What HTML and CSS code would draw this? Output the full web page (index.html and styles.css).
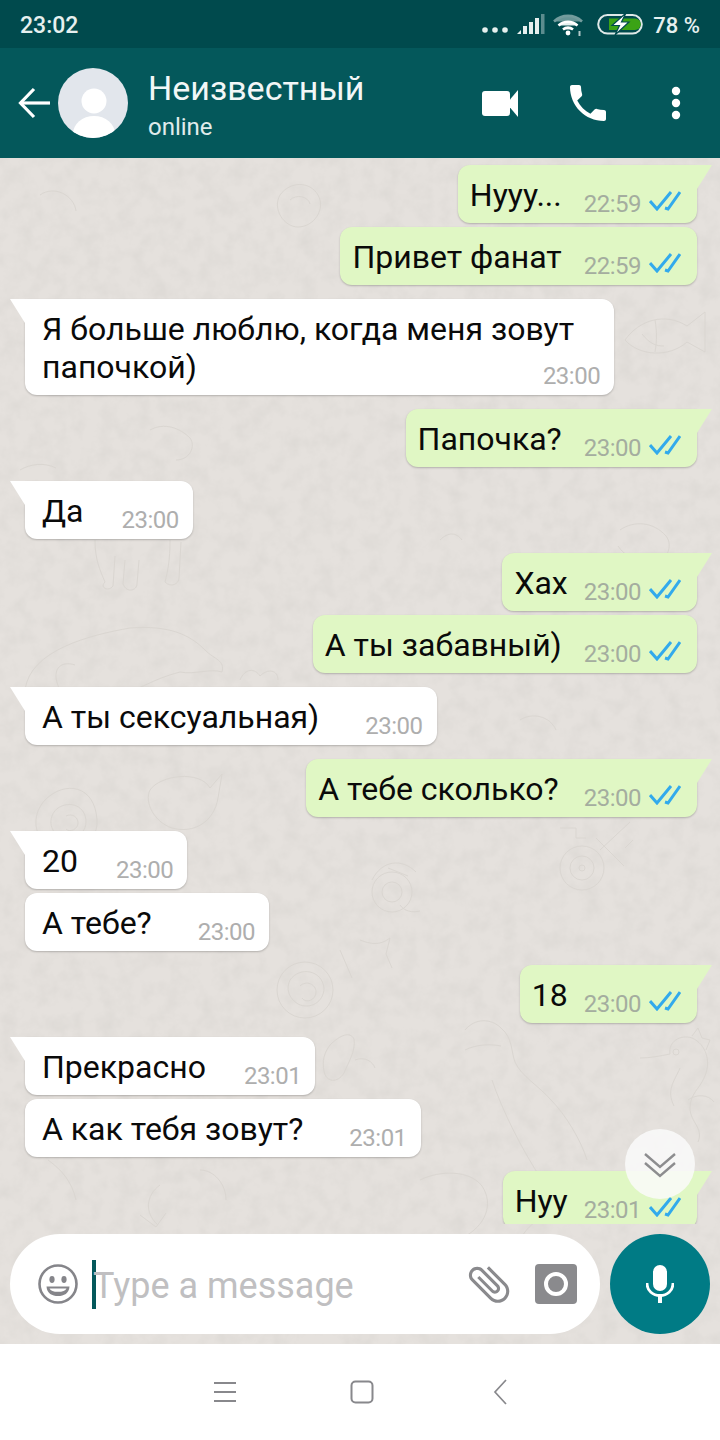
FILE: index.html
```html
<!DOCTYPE html>
<html lang="ru">
<head>
    <meta charset="UTF-8" />
    <meta name="viewport" content="width=device-width, initial-scale=1" />
    <title>Неизвестный</title>
    <link rel="stylesheet" href="styles.css">
</head>
<body>
<div class="phone">

    <div class="status-bar">
        <span class="status-time">23:02</span>
        <div class="status-right">
            <svg class="st-dots" width="26" height="6" viewBox="0 0 26 6"><circle cx="3" cy="3" r="2.8"/><circle cx="13" cy="3" r="2.8"/><circle cx="23" cy="3" r="2.8"/></svg>
            <svg class="st-signal" width="28" height="21" viewBox="0 0 28 21"><path d="M0 20l4-4v4z"/><rect x="6" y="12" width="4" height="8"/><rect x="12" y="8" width="4" height="12"/><rect x="18" y="4" width="4" height="16"/><rect x="24" y="0" width="3.5" height="20" opacity=".4"/></svg>
            <svg class="st-wifi" width="31" height="24" viewBox="0 0 31 24" fill="none" stroke="#fff" stroke-width="2.6"><path d="M1 8.500C9 1 21 1 29 8.500" opacity=".45"/><path d="M5.500 12.500C11 7.500 19 7.500 24.500 12.500"/><path d="M10 16.500C13 14 17 14 20 16.500"/><circle cx="15" cy="20" r="2.400" fill="#fff" stroke="none"/><path d="M26.500 18v5" stroke-width="2" opacity=".7"/></svg>
            <svg class="st-batt" width="46" height="22" viewBox="0 0 46 22"><rect x="1.200" y="2" width="43.600" height="18.600" rx="9.300" fill="none" stroke="#dfe9e8" stroke-width="2"/><path d="M12 5.500h26a5.600 5.600 0 0 1 0 11.500H12z" fill="#3ba315"/><path d="M29 0L15 12.500h7.500L18 22l14-13h-7.500z" fill="#fff" stroke="#004a4d" stroke-width="1.200"/></svg>
            <span class="status-batt">78 %</span>
        </div>
    </div>

    <header class="chat-header">
        <svg class="back-icon" width="32" height="32" viewBox="0 0 32 32" fill="none" stroke="#fff" stroke-width="3.200"><path d="M32 16H3"/><path d="M16 2L2.500 16 16 30"/></svg>
        <svg class="avatar" width="70" height="70" viewBox="0 0 70 70"><defs><clipPath id="av"><circle cx="35" cy="35" r="35"/></clipPath></defs><circle cx="35" cy="35" r="35" fill="#e2e6ec"/><circle cx="36" cy="33" r="12.500" fill="#fff"/><ellipse cx="36" cy="66" rx="21" ry="18" fill="#fff" clip-path="url(#av)"/></svg>
        <div class="contact">
            <div class="contact-name">Неизвестный</div>
            <div class="contact-status">online</div>
        </div>
        <div class="header-actions">
            <svg class="act-video" width="36" height="29" viewBox="0 0 36 29" fill="#fff"><path d="M3 2h22a3 3 0 0 1 3 3v19a3 3 0 0 1-3 3H3a3 3 0 0 1-3-3V5a3 3 0 0 1 3-3z"/><path d="M28 10.500L36 1v27l-8-9.500z"/></svg>
            <svg class="act-phone" width="36" height="36" viewBox="3 3 18 18" fill="#fff"><path d="M6.620 10.790c1.440 2.830 3.760 5.140 6.590 6.590l2.200-2.200c.27-.27.67-.36 1.020-.24 1.120.37 2.330.57 3.570.57.55 0 1 .45 1 1V20c0 .55-.45 1-1 1-9.390 0-17-7.610-17-17 0-.55.45-1 1-1h3.500c.55 0 1 .45 1 1 0 1.250.2 2.450.57 3.570.11.35.03.74-.25 1.020l-2.200 2.200z"/></svg>
            <svg class="act-more" width="10" height="34" viewBox="0 0 10 34" fill="#fff"><circle cx="5" cy="5" r="4.200"/><circle cx="5" cy="17" r="4.200"/><circle cx="5" cy="29" r="4.200"/></svg>
        </div>
    </header>

    <main class="chat">
        <svg class="wallpaper" width="720" height="1186" viewBox="0 158 720 1186" fill="none" stroke="#dad6d1" stroke-width="1">
            <defs>
                <filter id="marble" x="0" y="0" width="100%" height="100%">
                    <feTurbulence type="fractalNoise" baseFrequency="0.06" numOctaves="4" seed="7"/>
                    <feColorMatrix values="0 0 0 0 0.66  0 0 0 0 0.64  0 0 0 0 0.61  0 0 0 0.8 -0.3"/>
                </filter>
            </defs>
            <rect x="0" y="158" width="720" height="1186" filter="url(#marble)" stroke="none" fill="#fff"/>
            <!-- dino -->
            <path d="M25 690C30 650 90 635 130 628C170 625 190 635 205 650C215 660 225 660 222 672C210 668 195 675 180 672C150 680 140 690 130 690M60 690C50 670 60 660 75 665"/>
            <path d="M240 680c5-12 15-12 20-4c8-8 18-6 18 4"/>
            <!-- hippo above -->
            <path d="M95 540c0 20 5 30 10 42c-6 6 4 10 8 4l2-30M125 560l-2 24c4 10 14 6 14 0l2-24M170 540c0 20-2 30-5 42c6 6 14 2 14-4l2-36"/>
            <!-- rose, lower left -->
            <path d="M45 800c20-20 50-15 52 20c2 25-30 40-50 25c-15-12-14-32-2-45zM58 808c12-8 28-2 28 14c0 14-18 22-30 12c-8-8-6-20 2-26zM66 816c6-3 12 1 12 7s-8 10-12 6"/>
            <path d="M150 790c10-15 50-20 60-2l12-14l-4 24c-4 24-24 36-46 30c-18-6-28-26-22-38z"/>
            <!-- wheel -->
            <circle cx="582" cy="868" r="22"/><circle cx="582" cy="868" r="12"/><circle cx="582" cy="868" r="3"/>
            <path d="M600 850l30-28M596 838l28 28M560 828h16v10h10M625 848l8-8"/>
            <!-- rose centre -->
            <circle cx="392" cy="892" r="20"/><circle cx="392" cy="892" r="10"/><path d="M372 880c10-20 30-22 44-8M388 868l20 8M400 905c4 6 12 8 20 6"/>
            <circle cx="305" cy="990" r="28"/><path d="M290 980c10-14 32-10 34 8c0 14-14 22-26 16c-10-6-12-16-8-24zM300 986c6-6 16-2 16 6s-10 12-14 6"/>
            <path d="M360 940c10 4 20 6 30-2l-4 16l6 14M340 950l12 28"/>
            <!-- seahorse -->
            <path d="M640 1058c10 0 20-2 30-4c-2-12 10-20 22-16c14 6 20 24 12 40c-4 10-14 16-14 30c0 14 14 20 8 34M692 1036l6-8l4 10l8 2l-4 10M688 1100c8-6 20-6 26 2M680 1068c-6 14-14 22-6 38"/>
            <circle cx="676" cy="1052" r="3"/>
            <!-- bird -->
            <path d="M465 1030c10-12 26-12 36-2c12 10 10 24 14 34c6 14 24 24 36 38c14 14 30 40 36 60M465 1050c12-6 26-6 36-4M492 1080c10 30 30 70 50 100"/>
            <path d="M330 1045c10-10 20-14 24-6c2 12-6 24-10 34c-6 10-18 10-20-2c-2-10 0-18 6-26zM355 1060c10-4 18 2 20 8"/>
            <path d="M160 1185c-14 10-16 28-2 40M200 1170c14 0 26 14 26 30M140 1215l16 12 10-14M48 1160c14 10 24 22 28 40"/>
            <path d="M420 1180c20-10 50-10 62 6c12 18 4 40-20 52M520 1240c10-20 30-30 54-24"/>
            <!-- fish, top right -->
            <path d="M625 340c14-20 40-28 62-14l18-14v40l-18-10c-18 16-48 14-62-2zM642 334c8 10 14 12 22 12M655 320c2 12 2 20 0 32"/>
            <path d="M280 195c10-14 30-14 38 0c8 14-4 32-20 32c-14 0-26-18-18-32zM290 200c6-6 18-4 20 4"/>
            <path d="M40 195c14-10 34 0 36 16M20 470c10-6 24-8 36-2M620 530c14-10 34-8 46 6c8 10 0 26-12 28c-14 0-30-8-36-18M600 560l20 10"/>
            <path d="M150 430c14-8 30-2 40 8c6 8 0 22-14 22"/>
            <path d="M440 540c8-8 16-8 22 0M430 700c6 10 6 26 0 36M520 720c12-8 30-4 36 10"/>
        </svg>

        <div class="messages">
            <div class="msg out"><span class="msg-text">Нууу...</span><span class="meta"><span class="time">22:59</span><svg class="ticks" width="32" height="20" viewBox="0 0 32 20"><path d="M1 10l7 8L22 1M16 17l3 1L31 1"/></svg></span></div>
            <div class="msg out same"><span class="msg-text">Привет фанат</span><span class="meta"><span class="time">22:59</span><svg class="ticks" width="32" height="20" viewBox="0 0 32 20"><path d="M1 10l7 8L22 1M16 17l3 1L31 1"/></svg></span></div>

            <div class="msg in multi"><span class="msg-text">Я больше люблю, когда меня зовут<br>папочкой)</span><span class="meta"><span class="time">23:00</span></span></div>

            <div class="msg out"><span class="msg-text">Папочка?</span><span class="meta"><span class="time">23:00</span><svg class="ticks" width="32" height="20" viewBox="0 0 32 20"><path d="M1 10l7 8L22 1M16 17l3 1L31 1"/></svg></span></div>

            <div class="msg in"><span class="msg-text">Да</span><span class="meta"><span class="time">23:00</span></span></div>

            <div class="msg out tight"><span class="msg-text">Хах</span><span class="meta"><span class="time">23:00</span><svg class="ticks" width="32" height="20" viewBox="0 0 32 20"><path d="M1 10l7 8L22 1M16 17l3 1L31 1"/></svg></span></div>
            <div class="msg out same"><span class="msg-text">А ты забавный)</span><span class="meta"><span class="time">23:00</span><svg class="ticks" width="32" height="20" viewBox="0 0 32 20"><path d="M1 10l7 8L22 1M16 17l3 1L31 1"/></svg></span></div>

            <div class="msg in wide"><span class="msg-text">А ты сексуальная)</span><span class="meta"><span class="time">23:00</span></span></div>

            <div class="msg out roomy"><span class="msg-text">А тебе сколько?</span><span class="meta"><span class="time">23:00</span><svg class="ticks" width="32" height="20" viewBox="0 0 32 20"><path d="M1 10l7 8L22 1M16 17l3 1L31 1"/></svg></span></div>

            <div class="msg in"><span class="msg-text">20</span><span class="meta"><span class="time">23:00</span></span></div>
            <div class="msg in same wide"><span class="msg-text">А тебе?</span><span class="meta"><span class="time">23:00</span></span></div>

            <div class="msg out tight"><span class="msg-text">18</span><span class="meta"><span class="time">23:00</span><svg class="ticks" width="32" height="20" viewBox="0 0 32 20"><path d="M1 10l7 8L22 1M16 17l3 1L31 1"/></svg></span></div>

            <div class="msg in"><span class="msg-text">Прекрасно</span><span class="meta"><span class="time">23:01</span></span></div>
            <div class="msg in same wide"><span class="msg-text">А как тебя зовут?</span><span class="meta"><span class="time">23:01</span></span></div>

            <div class="msg out tight"><span class="msg-text">Нуу</span><span class="meta"><span class="time">23:01</span><svg class="ticks" width="32" height="20" viewBox="0 0 32 20"><path d="M1 10l7 8L22 1M16 17l3 1L31 1"/></svg></span></div>
        </div>

        <div class="scroll-down">
            <svg width="32" height="26" viewBox="0 0 32 26" fill="none" stroke="#8d8d8f" stroke-width="2.400"><path d="M1 2l15 13L31 2"/><path d="M1 11l15 13 15-13"/></svg>
        </div>

        <div class="composer">
            <div class="input-box">
                <svg class="emoji" width="40" height="40" viewBox="0 0 40 40"><circle cx="20" cy="20" r="18.500" fill="none" stroke="#85858a" stroke-width="2.600"/><ellipse cx="14" cy="15.500" rx="2.600" ry="3.400" fill="#85858a"/><ellipse cx="26" cy="15.500" rx="2.600" ry="3.400" fill="#85858a"/><path d="M8.500 22.500h23c-.5 7-5.500 9.500-11.500 9.500S9 29.500 8.500 22.500z" fill="#85858a"/><path d="M11.500 24.500h17c-1 2.500-4 3.300-8.500 3.300s-7.500-.8-8.500-3.300z" fill="#fff"/></svg>
                <span class="cursor"></span>
                <span class="placeholder">Type a message</span>
                <svg class="clip" width="50" height="50" viewBox="0 0 24 24" fill="#8a8a8d"><path transform="rotate(-45 12 12)" d="M16.500 6v11.500c0 2.210-1.790 4-4 4s-4-1.790-4-4V5c0-1.380 1.120-2.500 2.500-2.500s2.500 1.120 2.500 2.500v10.500c0 .55-.45 1-1 1s-1-.45-1-1V6H10v9.500c0 1.380 1.120 2.500 2.500 2.500s2.500-1.120 2.500-2.500V5c0-2.210-1.790-4-4-4S7 2.790 7 5v12.500c0 3.040 2.460 5.500 5.500 5.500s5.500-2.460 5.500-5.500V6h-1.500z"/></svg>
                <svg class="camera" width="42" height="40" viewBox="0 0 42 40"><rect width="42" height="40" rx="4" fill="#8a8a8d"/><circle cx="21" cy="20" r="10" fill="none" stroke="#fff" stroke-width="4"/></svg>
            </div>
            <button class="mic-btn">
                <svg width="28" height="38" viewBox="0 0 28 38" fill="#fff"><rect x="7" y="0" width="14" height="26" rx="7"/><path d="M1 18c0 8 6 12.500 13 12.500S27 26 27 18" fill="none" stroke="#fff" stroke-width="2.800"/><rect x="12" y="30" width="4" height="8"/></svg>
            </button>
        </div>
    </main>

    <nav class="nav-bar">
        <svg width="24" height="22" viewBox="0 0 24 22" fill="none" stroke="#88888c" stroke-width="2"><path d="M1 2h22M1 11h22M1 20h22"/></svg>
        <svg class="nav-home" width="24" height="24" viewBox="0 0 24 24" fill="none" stroke="#88888c" stroke-width="2"><rect x="1.500" y="1.500" width="21" height="21" rx="4"/></svg>
        <svg class="nav-back" width="14" height="26" viewBox="0 0 14 26" fill="none" stroke="#88888c" stroke-width="1.700"><path d="M13 1L2 13l11 12"/></svg>
    </nav>
</div>
</body>
</html>
```

FILE: styles.css
```css
* {
    box-sizing: border-box;
}
body {
    margin: 0;
    padding: 0;
    font-family: Roboto, "Liberation Sans", sans-serif;
    background: #fff;
}
.phone {
    width: 720px;
    height: 1440px;
    display: flex;
    flex-direction: column;
    overflow: hidden;
}

/* status bar */
.status-bar {
    height: 48px;
    flex: none;
    background: #004a4d;
    color: #e6f0ef;
    display: flex;
    align-items: center;
    justify-content: space-between;
    padding: 2px 20px 0;
}
.status-time {
    font-size: 23px;
    font-weight: 500;
}
.status-right {
    display: flex;
    align-items: center;
}
.status-right svg {
    fill: #e6f0ef;
    flex: none;
}
.st-dots {
    margin-top: 9px;
}
.st-signal {
    margin-left: 9px;
    margin-top: -2px;
}
.st-wifi {
    margin-left: 8px;
}
.st-batt {
    margin-left: 13px;
    margin-top: -3px;
}
.status-batt {
    margin-left: 10px;
    font-size: 22px;
    font-weight: 500;
}

/* header */
.chat-header {
    height: 110px;
    flex: none;
    background: #04585b;
    display: flex;
    align-items: center;
    padding-left: 18px;
    color: #fff;
}
.back-icon {
    flex: none;
}
.avatar {
    flex: none;
    margin-left: 8px;
}
.contact {
    margin-left: 20px;
    padding-top: 6px;
    flex: 1;
}
.contact-name {
    font-size: 34px;
    line-height: 42px;
    color: #f2f7f7;
}
.contact-status {
    font-size: 24px;
    line-height: 36px;
    color: #e0ecec;
}
.header-actions {
    display: flex;
    align-items: center;
    padding-right: 39px;
}
.act-phone {
    margin-left: 52px;
}
.act-more {
    margin-left: 65px;
}

/* chat */
.chat {
    flex: 1;
    position: relative;
    background: #e5e1dd;
    display: flex;
    flex-direction: column;
    min-height: 0;
}
.wallpaper {
    position: absolute;
    left: 0;
    top: 0;
}
.messages {
    flex: 1;
    min-height: 0;
    position: relative;
    overflow: hidden;
    display: flex;
    flex-direction: column;
    padding: 7px 23px 0 25px;
    margin-bottom: 10px;
}
.msg {
    flex: none;
    position: relative;
    display: flex;
    align-items: flex-end;
    border-radius: 12px;
    box-shadow: 0 1px 2px rgba(0,0,0,0.22);
    margin-top: 14px;
    padding: 11px 14px 9px 17px;
}
.msg.same {
    margin-top: 4px;
}
.msg:first-child {
    margin-top: 0;
}
.msg.in {
    align-self: flex-start;
    background: #fff;
    border-top-left-radius: 0;
}
.msg.out {
    align-self: flex-end;
    background: #e0f7c4;
    border-top-right-radius: 0;
    padding: 11px 16px 9px 12px;
}
.msg.in:not(.same)::before,
.msg.out:not(.same)::before {
    content: "";
    position: absolute;
    top: 0;
    width: 15px;
    height: 24px;
}
.msg.in:not(.same)::before {
    left: -15px;
    background: #fff;
    clip-path: polygon(0 0, 100% 0, 100% 100%);
}
.msg.out:not(.same)::before {
    right: -15px;
    background: #e0f7c4;
    clip-path: polygon(0 0, 100% 0, 0 100%);
}
.msg.same.in {
    border-top-left-radius: 12px;
}
.msg.same.out {
    border-top-right-radius: 12px;
}
.msg-text {
    font-size: 32px;
    line-height: 38px;
    color: #0a0a0a;
}
.meta {
    display: flex;
    align-items: center;
    margin-left: 38px;
    margin-bottom: -3px;
    height: 26px;
}
.msg.wide .meta {
    margin-left: 46px;
}
.msg.out .meta {
    margin-left: 22px;
}
.msg.out.tight .meta {
    margin-left: 16px;
}
.msg.out.roomy .meta {
    margin-left: 25px;
}
.time {
    font-size: 24px;
    line-height: 26px;
    letter-spacing: -.5px;
    color: #aeaeae;
}
.msg.out .time {
    color: #a4ad9f;
}
.ticks {
    margin-left: 8px;
    margin-top: -6px;
    fill: none;
    stroke: #32aaec;
    stroke-width: 3;
}
.msg.multi {
    display: block;
    padding-right: 40px;
    height: 96px;
}
.msg.multi .meta {
    position: absolute;
    right: 14px;
    bottom: 6px;
    margin: 0;
}

/* floating button */
.scroll-down {
    position: absolute;
    left: 625px;
    top: 971px;
    width: 70px;
    height: 70px;
    border-radius: 50%;
    background: rgba(250,250,250,0.85);
    display: flex;
    align-items: center;
    justify-content: center;
    padding-top: 2px;
}

/* composer */
.composer {
    flex: none;
    position: relative;
    display: flex;
    gap: 10px;
    padding: 0 10px 10px;
}
.input-box {
    flex: 1;
    height: 100px;
    border-radius: 50px;
    background: #fff;
    display: flex;
    align-items: center;
    padding-left: 28px;
}
.emoji {
    flex: none;
}
.cursor {
    width: 4px;
    height: 49px;
    background: #04585b;
    margin-left: 14px;
    flex: none;
}
.placeholder {
    font-size: 36px;
    color: #c0bfc1;
    margin-left: -3px;
    margin-top: 4px;
    flex: 1;
}
.clip {
    flex: none;
}
.camera {
    flex: none;
    margin-left: 21px;
    margin-right: 23px;
}
.mic-btn {
    width: 100px;
    height: 100px;
    border: none;
    border-radius: 50%;
    background: #007b85;
    display: flex;
    align-items: center;
    justify-content: center;
    padding: 0;
}

/* nav */
.nav-bar {
    height: 96px;
    flex: none;
    background: #fff;
    display: flex;
    align-items: center;
    padding-left: 213px;
}
.nav-home {
    margin-left: 113px;
}
.nav-back {
    margin-left: 119px;
}
```
